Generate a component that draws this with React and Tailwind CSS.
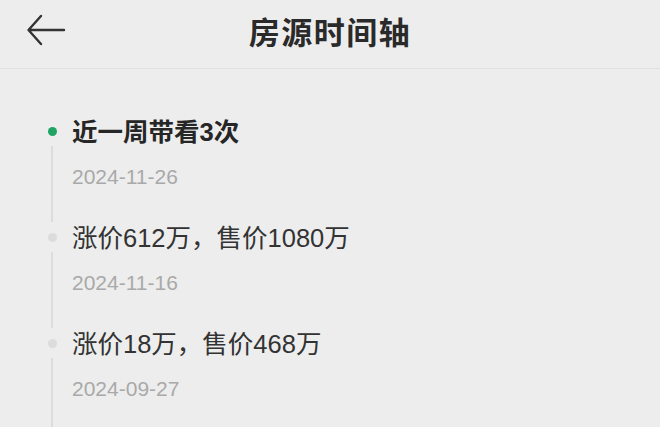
import React from 'react';

const events = [
  { title: '近一周带看3次', date: '2024-11-26', active: true },
  { title: '涨价612万，售价1080万', date: '2024-11-16' },
  { title: '涨价18万，售价468万', date: '2024-09-27' },
];

const font = { fontFamily: '"Liberation Sans", "Noto Sans CJK SC", sans-serif' };

const TimelineItem = ({ item }) => (
  <div className="flex pb-[31px]">
    <div className="ml-[47px] flex w-[10px] flex-col items-center">
      <div className={`mt-[11px] h-[9px] w-[9px] shrink-0 rounded-full ${item.active ? 'bg-[#1fa463]' : 'bg-[#dcdcdc]'}`}></div>
      <div className="mt-[10px] -mb-[31px] w-[2px] flex-1 bg-[#dcdcdc]"></div>
    </div>
    <div className="ml-[15px]">
      <div className={`text-[25.5px] leading-[32px] ${item.active ? 'font-bold text-[#262626]' : 'text-[#333333]'}`}>
        {item.title}
      </div>
      <div className="mt-[15px] text-[21px] leading-[28px] text-[#a9a9a9]">{item.date}</div>
    </div>
  </div>
);

export default function App() {
  return (
    <div className="h-[427px] w-[660px] overflow-hidden bg-[#ededed]" style={font}>
      <div className="relative flex h-[69px] items-center justify-center border-b border-[#e0e0e0]">
        <svg className="absolute left-[26px] top-[14px]" width="40" height="34" viewBox="0 0 40 34" fill="none">
          <path d="M38 16H3M15 2L2.5 16L15 30" stroke="#333" strokeWidth="2.4" strokeLinecap="round" strokeLinejoin="round" />
        </svg>
        <h1 className="text-[31px] font-bold tracking-[1.5px] text-[#2a2a2a]">房源时间轴</h1>
      </div>
      <div className="pt-[47px]">
        {events.map((e) => (
          <TimelineItem key={e.date} item={e} />
        ))}
      </div>
    </div>
  );
}
